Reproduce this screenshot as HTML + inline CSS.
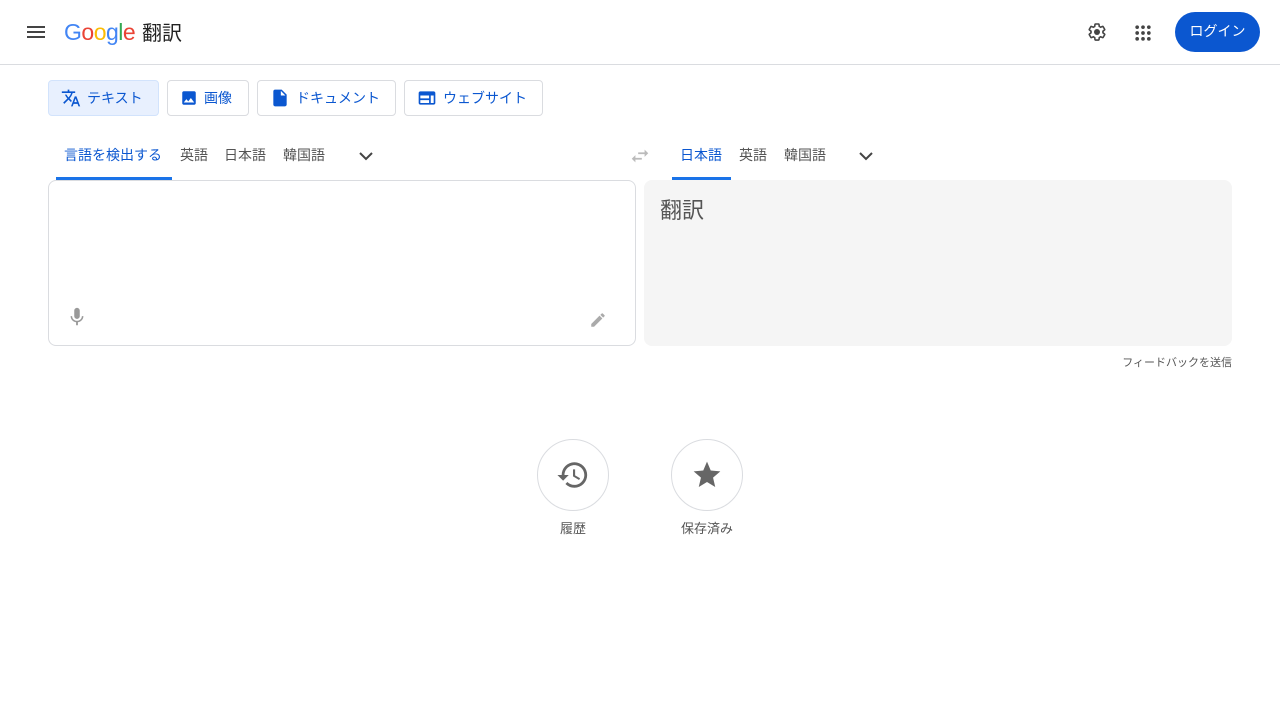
<!DOCTYPE html>
<html><head><meta charset="utf-8"><style>
*{box-sizing:border-box;margin:0;padding:0}
body{width:1280px;height:720px;background:#fff;font-family:"Liberation Sans","Noto Sans CJK JP",sans-serif;position:relative;overflow:hidden;color:#444}
.a{position:absolute}
.hdr{left:0;top:0;width:1280px;height:65px;border-bottom:1px solid #dadce0}
.btn{position:absolute;top:80px;height:36px;border:1px solid #dadce0;border-radius:4px;font-size:14px;color:#0b57d0;display:flex;align-items:center;padding-left:12px}
.btn svg{margin-right:6px}
.tab{position:absolute;top:145px;font-size:14px;color:#555}
.box{border:1px solid #dadce0;border-radius:8px}
</style></head><body>
<div class="a hdr"></div>
<svg class="a" style="left:24px;top:20px" width="24" height="24" viewBox="0 0 24 24"><path d="M3 6h18v2H3zM3 11h18v2H3zM3 16h18v2H3z" fill="#444"/></svg>
<div class="a" style="left:64px;top:19px;font-size:23px;letter-spacing:-0.5px;font-family:'Liberation Sans',sans-serif"><span style="color:#4285f4">G</span><span style="color:#ea4335">o</span><span style="color:#fbbc05">o</span><span style="color:#4285f4">g</span><span style="color:#34a853">l</span><span style="color:#ea4335">e</span></div>
<div class="a" style="left:142px;top:17px;font-size:20px;color:#222">翻訳</div>
<svg class="a" style="left:1085px;top:20px" width="24" height="24" viewBox="0 0 24 24"><path fill="none" stroke="#444" stroke-width="2" d="M19.4 13c.04-.33.06-.66.06-1s-.02-.67-.06-1l2.1-1.65c.2-.15.25-.42.13-.64l-2-3.46c-.12-.22-.39-.3-.61-.22l-2.49 1c-.52-.4-1.08-.73-1.69-.98l-.38-2.65A.49.49 0 0 0 14 2h-4c-.25 0-.46.18-.49.42l-.38 2.65c-.61.25-1.17.59-1.69.98l-2.49-1c-.23-.09-.49 0-.61.22l-2 3.46c-.13.22-.07.49.12.64L4.57 11c-.04.33-.07.66-.07 1s.03.67.07 1l-2.11 1.65c-.19.15-.24.42-.12.64l2 3.46c.12.22.39.3.61.22l2.49-1c.52.4 1.08.73 1.69.98l.38 2.65c.03.24.24.42.49.42h4c.25 0 .46-.18.49-.42l.38-2.65c.61-.25 1.17-.59 1.69-.98l2.49 1c.23.09.49 0 .61-.22l2-3.46c.12-.22.07-.49-.12-.64L19.4 13z" transform="translate(2.4 2.4) scale(.8)"/><circle cx="12" cy="12" r="3" fill="#444"/></svg>
<svg class="a" style="left:1133px;top:23px" width="20" height="20" viewBox="0 0 24 24" fill="#444"><circle cx="5" cy="5" r="2.2"/><circle cx="12" cy="5" r="2.2"/><circle cx="19" cy="5" r="2.2"/><circle cx="5" cy="12" r="2.2"/><circle cx="12" cy="12" r="2.2"/><circle cx="19" cy="12" r="2.2"/><circle cx="5" cy="19" r="2.2"/><circle cx="12" cy="19" r="2.2"/><circle cx="19" cy="19" r="2.2"/></svg>
<div class="a" style="left:1175px;top:12px;width:85px;height:40px;border-radius:20px;background:#0b57d0;color:#fff;font-size:14px;text-align:center;line-height:38px">ログイン</div>

<div class="btn" style="left:48px;width:111px;background:#e8f0fe;border-color:#d2e3fc"><svg width="20" height="20" viewBox="0 0 24 24"><path fill="#0b57d0" d="M12.87 15.07l-2.54-2.51.03-.03A17.52 17.52 0 0 0 14.07 6H17V4h-7V2H8v2H1v2h11.17C11.5 7.92 10.44 9.75 9 11.35 8.07 10.32 7.3 9.19 6.69 8h-2c.73 1.630 1.73 3.17 2.98 4.56l-5.09 5.02L4 19l5-5 3.11 3.11.76-2.04zM18.5 10h-2L12 22h2l1.12-3h4.75L21 22h2l-4.5-12zm-2.62 7l1.620-4.33L19.12 17h-3.24z"/></svg>テキスト</div>
<div class="btn" style="left:167px;width:82px"><svg width="18" height="18" viewBox="0 0 24 24"><path fill="#0b57d0" d="M21 19V5c0-1.1-.9-2-2-2H5c-1.1 0-2 .9-2 2v14c0 1.1.9 2 2 2h14c1.1 0 2-.9 2-2zM8.5 13.5l2.5 3 3.5-4.5 4.5 6H5l3.5-4.5z"/></svg>画像</div>
<div class="btn" style="left:257px;width:139px"><svg width="20" height="20" viewBox="0 0 24 24"><path fill="#0b57d0" d="M6 2c-1.1 0-2 .9-2 2v16c0 1.1.9 2 2 2h12c1.1 0 2-.9 2-2V8l-6-6H6zm7 7V3.5L18.5 9H13z"/></svg>ドキュメント</div>
<div class="btn" style="left:404px;width:139px"><svg width="20" height="20" viewBox="0 0 24 24"><path fill="#0b57d0" d="M20 4H4c-1.1 0-2 .9-2 2v12c0 1.1.9 2 2 2h16c1.1 0 2-.9 2-2V6c0-1.1-.9-2-2-2zM4 9h10.5v3.5H4V9zm0 5.5h10.5V18H4v-3.5zM20 18h-3.5V9H20v9z"/></svg>ウェブサイト</div>

<div class="tab" style="left:64px;color:#0b57d0">言語を検出する</div>
<div class="a" style="left:56px;top:177px;width:116px;height:3px;background:#1a73e8"></div>
<div class="tab" style="left:180px">英語</div>
<div class="tab" style="left:224px">日本語</div>
<div class="tab" style="left:283px">韓国語</div>
<svg class="a" style="left:354px;top:144px" width="24" height="24" viewBox="0 0 24 24"><path d="M6 9l6 6 6-6" stroke="#444" stroke-width="2" fill="none"/></svg>
<svg class="a" style="left:628px;top:145px" width="24" height="22" viewBox="0 0 24 24"><path fill="#bbb" d="M6.99 11L3 15l3.99 4v-3H14v-2H6.99v-3zM21 9l-3.99-4v3H10v2h7.01v3L21 9z"/></svg>
<div class="tab" style="left:680px;color:#0b57d0">日本語</div>
<div class="a" style="left:672px;top:177px;width:59px;height:3px;background:#1a73e8"></div>
<div class="tab" style="left:739px">英語</div>
<div class="tab" style="left:784px">韓国語</div>
<svg class="a" style="left:854px;top:144px" width="24" height="24" viewBox="0 0 24 24"><path d="M6 9l6 6 6-6" stroke="#444" stroke-width="2" fill="none"/></svg>

<div class="a box" style="left:48px;top:180px;width:588px;height:166px"></div>
<svg class="a" style="left:66px;top:305px" width="22" height="24" viewBox="0 0 24 24"><path fill="#999" d="M12 14c1.66 0 3-1.34 3-3V5c0-1.66-1.34-3-3-3S9 3.34 9 5v6c0 1.66 1.34 3 3 3zm5.3-3c0 3-2.54 5.1-5.3 5.1S6.7 14 6.7 11H5c0 3.41 2.72 6.23 6 6.72V21h2v-3.28c3.28-.48 6-3.3 6-6.72h-1.7z"/></svg>
<svg class="a" style="left:589px;top:311px" width="18" height="18" viewBox="0 0 24 24"><path fill="#aaa" d="M3 17.25V21h3.75L17.81 9.94l-3.75-3.75L3 17.25zM20.71 7.04a1 1 0 0 0 0-1.41l-2.34-2.34a1 1 0 0 0-1.41 0l-1.83 1.83 3.75 3.75 1.83-1.83z"/></svg>
<div class="a" style="left:644px;top:180px;width:588px;height:166px;background:#f5f5f5;border-radius:8px"></div>
<div class="a" style="left:660px;top:193px;font-size:22px;color:#555">翻訳</div>
<div class="a" style="left:1100px;top:354px;width:132px;text-align:right;font-size:11px;color:#555">フィードバックを送信</div>

<div class="a" style="left:537px;top:439px;width:72px;height:72px;border:1px solid #dadce0;border-radius:50%"></div>
<svg class="a" style="left:556px;top:458px" width="34" height="34" viewBox="0 0 24 24"><path fill="#666" d="M13 3a9 9 0 0 0-9 9H1l3.89 3.89.07.14L9 12H6c0-3.870 3.13-7 7-7s7 3.13 7 7-3.13 7-7 7c-1.93 0-3.68-.79-4.94-2.06l-1.42 1.42A8.95 8.95 0 0 0 13 21a9 9 0 0 0 0-18zm-1 5v5l4.28 2.54.72-1.21-3.5-2.08V8H12z"/></svg>
<div class="a" style="left:537px;top:518px;width:72px;text-align:center;font-size:13px;color:#555">履歴</div>
<div class="a" style="left:671px;top:439px;width:72px;height:72px;border:1px solid #dadce0;border-radius:50%"></div>
<svg class="a" style="left:691px;top:459px" width="32" height="32" viewBox="0 0 24 24"><path fill="#666" d="M12 17.27L18.18 21l-1.64-7.03L22 9.24l-7.19-.61L12 2 9.19 8.63 2 9.24l5.460 4.73L5.82 21z"/></svg>
<div class="a" style="left:661px;top:518px;width:92px;text-align:center;font-size:13px;color:#555">保存済み</div>
</body></html>
